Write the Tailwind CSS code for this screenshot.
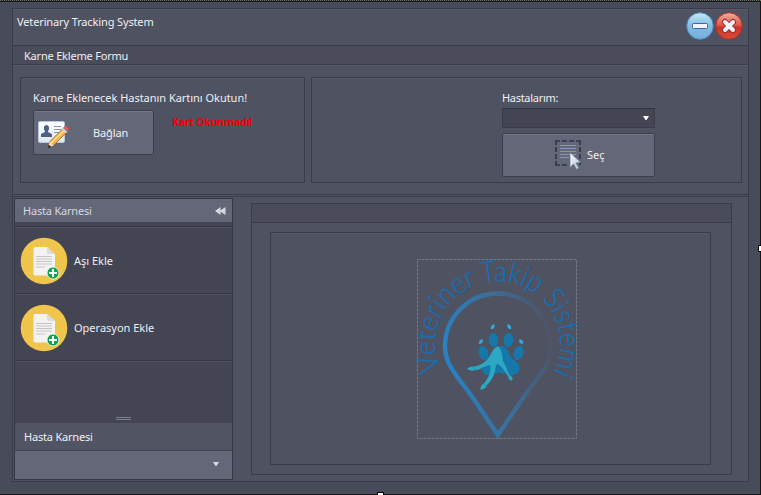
<!DOCTYPE html>
<html lang="tr">
<head>
<meta charset="utf-8">
<title>Veterinary Tracking System</title>
<script src="https://cdn.jsdelivr.net/npm/@tailwindcss/browser@4"></script>
</head>
<body class="w-[761px] h-[495px] overflow-hidden bg-[#484b59] text-[#eeeff4] text-[11px] leading-[15px] font-['Noto_Sans','Open_Sans',sans-serif]">
<div class="relative w-[761px] h-[495px] pt-[8px] pl-[12px] border-r border-b border-[#18181c]">
  <div class="absolute left-0 top-0 w-[761px] border-t border-dotted border-[#77776c] bg-[#191a1e] h-[2px]"></div>
  <div class="absolute left-[377px] top-[492px] w-[7px] h-[3px] bg-white border border-b-0 border-black"></div>
  <div class="absolute left-[758px] top-[245px] w-[3px] h-[7px] bg-white border border-r-0 border-black"></div>

  <div class="w-[737px] h-[474px] flex flex-col border border-[#3a3c49] bg-[#4f5261]">
    <header class="h-[37px] flex justify-between border-b border-[#3a3c49] border-t border-t-[#555867]">
      <h1 class="pl-[4px] pt-[4px] tracking-[-0.13px] whitespace-nowrap">Veterinary Tracking System</h1>
      <div class="flex gap-[1px] pt-[2px] pr-[5px]">
        <svg class="w-[28px] h-[28px]" viewBox="0 0 28 28">
          <defs><linearGradient id="bl" x2="0" y2="1"><stop stop-color="#c4eaf8"/><stop offset=".5" stop-color="#83bce0"/><stop offset="1" stop-color="#74afe0"/></linearGradient></defs>
          <circle cx="14" cy="14" r="13.3" fill="url(#bl)" stroke="#4a85ba"/>
          <rect x="6.500" y="11.500" width="15" height="5" rx="1" fill="#f3f4fb" stroke="#3868a8"/>
        </svg>
        <svg class="w-[28px] h-[28px]" viewBox="0 0 28 28">
          <defs><linearGradient id="rd" x2="0" y2="1"><stop stop-color="#f4ae9c"/><stop offset=".45" stop-color="#de5d4d"/><stop offset=".55" stop-color="#ca3329"/><stop offset="1" stop-color="#d94d38"/></linearGradient></defs>
          <circle cx="14" cy="14" r="13.3" fill="url(#rd)" stroke="#a72f2a"/>
          <path d="M10 10l8 8m0-8l-8 8" stroke="#a1262a" stroke-width="6" stroke-linecap="round"/>
          <path d="M10 10l8 8m0-8l-8 8" stroke="#f1f4fc" stroke-width="4" stroke-linecap="round"/>
        </svg>
      </div>
    </header>
    <div class="h-[19px] bg-[#4a4c5a] border-b border-[#3a3c49] pl-[11px] pt-[2px] tracking-[-0.2px] whitespace-nowrap">Karne Ekleme Formu</div>

    <section class="h-[130px] flex gap-[6px] pt-[11px] pl-[7px] border-t border-t-[#575a69] border-b border-b-[#3a3c49]">
      <div class="w-[285px] h-[106px] border border-[#3a3c49] pl-[12px] pt-[12px] shadow-[inset_0_1px_#555867]">
        <p class="whitespace-nowrap h-[20px] tracking-[-0.03px]">Karne Eklenecek Hastanın Kartını Okutun!</p>
        <div class="flex gap-[18px]">
          <button class="w-[121px] h-[45px] rounded-[2px] border border-[#3b3d4a] bg-[#646777] shadow-[inset_0_1px_#757888] flex items-center pl-[4px]">
            <svg class="w-[32px] h-[32px]" viewBox="0 0 32 32">
              <defs><linearGradient id="cd" x2="0" y2="1"><stop stop-color="#fff"/><stop offset="1" stop-color="#dfe6f2"/></linearGradient></defs>
              <rect x=".5" y="4.500" width="26" height="21" rx="1.500" fill="url(#cd)" stroke="#b5c7e3"/>
              <path d="M3 20v-2c0-2 3-2 4-3v-1c-2-2-1-6 1.500-6s3.500 4 1.500 6v1c1 1 4 1 4 3v2z" fill="#4d5f82"/>
              <path d="M16 9.500h7m-7 3h7m-7 3h7" stroke="#8495b2"/>
              <path d="M10 30.500l1.800-6L25 11.500l4 3.500L15.500 28.500z" fill="#f3b34a" stroke="#a4682b" stroke-width=".8"/>
              <path d="M13 26L27 13" stroke="#ffe09a" stroke-width="1.500"/>
              <path d="M11.800 24.500l3.700 4-5.500 2z" fill="#f0ddc0"/>
              <path d="M10 30.800l.8-2.800 1.900 1.900z" fill="#242226" stroke="#242226" stroke-width=".6"/>
              <path d="M23.800 12.500l1.700-1.700 4 3.800-1.700 1.600z" fill="#c9d3e2"/>
              <path d="M25.500 10.800l1.500-1.300q1.200-.6 2.500.6t.9 2.700l-1.200 1.500z" fill="#de6668" stroke="#b53f45" stroke-width=".6"/>
            </svg>
            <span class="pl-[23px] tracking-[-0.1px]">Bağlan</span>
          </button>
          <p class="pt-[4px] font-bold text-[#ee0008] tracking-[-0.5px] whitespace-nowrap">Kart Okunmadı!</p>
        </div>
      </div>
      <div class="w-[431px] h-[106px] border border-[#3a3c49] pl-[190px] pt-[12px] shadow-[inset_0_1px_#555867]">
        <p class="h-[18px] tracking-[-0.3px]">Hastalarım:</p>
        <div class="w-[153px] h-[20px] bg-[#434553] border border-[#3a3c49] border-t-[#323440] flex items-center justify-end pr-[5px]">
          <svg class="w-[6px] h-[4px]" viewBox="0 0 6 4"><path d="M0 0h6L3.500 4h-1z" fill="#fff"/></svg>
        </div>
        <button class="mt-[5px] w-[153px] h-[44px] rounded-[2px] border border-[#3b3d4a] bg-[#646777] shadow-[inset_0_1px_#757888] flex items-center pl-[52px] pb-[1px]">
          <svg class="w-[26px] h-[32px]" viewBox="0 0 26 32">
            <defs><linearGradient id="ar" x2="1" y2="1"><stop stop-color="#fff"/><stop offset="1" stop-color="#a9b7cf"/></linearGradient></defs>
            <path d="M1 6V2h4m2 0h5m2 0h5m2 0h4v4m0 2v5m0 2v5m0 2v4M1 8v5m0 2v5m0 2v4h4m2 0h5" fill="none" stroke="#2b3652" stroke-width="1.700"/>
            <path d="M5 6.500h16M5 9.500h16M5 12.500h16M5 15.500h16M5 18.500h9" stroke="#8793bb"/>
            <path d="M15 13.500v15l3.500-3.500 3 5.500 2.500-1.500-3-5 5-.5z" fill="url(#ar)" stroke="#65718a" stroke-width=".7"/>
          </svg>
          <span class="pl-[6px]">Seç</span>
        </button>
      </div>
    </section>

    <section class="mt-[1px] flex-1 flex border-t border-[#3a3c49] pt-[1px] pl-[1px]">
      <aside class="w-[219px] h-[282px] border border-[#353743] bg-[#434553] flex flex-col">
        <div class="h-[23px] bg-[#646777] text-[#d5d7e0] flex items-center justify-between pl-[8px] pr-[6px]">
          <span class="tracking-[-0.2px]">Hasta Karnesi</span>
          <svg class="w-[11px] h-[8px]" viewBox="0 0 11 8"><path d="M0 4l5.500-4v8zM4.500 4l6-4v8z" fill="#d5d7e0"/></svg>
        </div>
        <ul class="mt-[4px] h-[136px] border-t border-[#353743]">
          <li class="h-[67px] border-t border-t-[#4d505e] border-b border-b-[#353743] flex items-center gap-[6px] pl-[5px]">
            <svg class="w-[48px] h-[48px]" viewBox="0 0 48 48">
              <defs><g id="doc">
                <circle cx="24" cy="24" r="23.300" fill="#efc64b"/>
                <path d="M15 10h12l8 7v20q0 1.500-1.500 1.500h-18.500q-1.500 0-1.500-1.500v-25.500q0-1.500 1.500-1.500z" fill="#f3f3f3"/>
                <path d="M27 10v5.500q0 1.500 1.500 1.500h6.500z" fill="#dcdcdc"/>
                <path d="M16 19.500h16M16 22h16M16 24.500h16M16 27h16M16 30h9" stroke="#c4c4c4"/>
                <circle cx="33" cy="36" r="6" fill="#10a451" stroke="#f7f7f7" stroke-width=".8"/>
                <path d="M33 32v8m-4-4h8" stroke="#fff" stroke-width="2"/>
              </g></defs><use href="#doc"/>
            </svg>
            <span>Aşı Ekle</span>
          </li>
          <li class="h-[67px] border-t border-t-[#4d505e] border-b border-b-[#353743] flex items-center gap-[6px] pl-[5px]">
            <svg class="w-[48px] h-[48px]" viewBox="0 0 48 48"><use href="#doc"/></svg>
            <span>Operasyon Ekle</span>
          </li>
          <li class="border-t border-[#4d505e]"></li>
        </ul>
        <div class="mt-auto mb-[3px] ml-[101px] w-[15px] h-[3px] border-y border-[#7b7e8d]"></div>
        <div class="h-[28px] bg-[#515463] border-b border-[#414451] pl-[9px] pt-[6px] tracking-[-0.2px]">Hasta Karnesi</div>
        <div class="h-[28px] bg-[#646777] flex items-center justify-end pr-[13px]">
          <svg class="w-[6px] h-[4px] mb-[2px]" viewBox="0 0 6 4"><path d="M0 0h6L3.500 4h-1z" fill="#d5d7e0"/></svg>
        </div>
      </aside>

      <main class="ml-[18px] mt-[5px] w-[481px] h-[272px] border border-[#3a3c49] flex flex-col">
        <div class="h-[19px] bg-[#4a4c5a] border-b border-[#3a3c49] shrink-0"></div>
        <div class="mt-[9px] ml-[18px] w-[441px] h-[233px] border border-[#3a3c49] shadow-[inset_0_1px_#555867] pl-[146px] pt-[26px]">
          <svg class="w-[160px] h-[180px] overflow-visible" viewBox="417 259 160 180">
            <defs>
              <linearGradient id="pin" gradientUnits="userSpaceOnUse" x1="443" y1="345" x2="551" y2="325">
                <stop stop-color="#2782c5"/><stop offset=".5" stop-color="#3476a9" stop-opacity=".8"/><stop offset="1" stop-color="#3476a9" stop-opacity=".03"/>
              </linearGradient>
              <path id="arc" d="M440.700 369A62.500 62.500 0 1 1 554 371"/>
            </defs>
            <rect x="417.500" y="259.500" width="159" height="179" fill="none" stroke="#747786" stroke-dasharray="3 1"/>
            <path d="M498 435L473 398C460 379 445 366 445 346.500A53 53 0 0 1 551 346.500C551 366 536 379 523 398Z" fill="none" stroke="url(#pin)" stroke-width="4.300"/>
            <text class="font-['Lato'] font-light" font-size="29" fill="#146fb5" stroke="#146fb5" stroke-width=".3"><textPath href="#arc" textLength="252" lengthAdjust="spacingAndGlyphs">Veteriner Takip Sistemi</textPath></text>
            <g fill="#1677aa">
              <ellipse cx="493.500" cy="340" rx="4.800" ry="7.200" transform="rotate(-5 493.500 340)"/>
              <ellipse cx="508.500" cy="340" rx="4.800" ry="7.200" transform="rotate(8 508.500 340)"/>
              <ellipse cx="483.500" cy="353" rx="4.800" ry="7.200" transform="rotate(-16 483.500 353)"/>
              <ellipse cx="518.500" cy="353" rx="4.800" ry="7.200" transform="rotate(16 518.500 353)"/>
              <path d="M501 346c6 0 7 5 9 10 2 4 9 5 9.500 11s-4 8-8 8-7-2-12-2-8 3-12 2c-4 0-6-4-5-8 1-3 7-5 9-10 2-6 4-11 9.500-11z"/>
            </g>
            <g fill="#32a9df">
              <path d="M494.500 324q-4.500 1-3.500 5.500l3-1.200q1-1.500.5-4.300z"/><path d="M507.500 324q4.500 1 3.500 5.500l-3-1.200q-1-1.500-.5-4.300z"/>
              <path d="M482.500 339q-4.500 1-3.500 5.200l3.300-1.200q1-1.500.2-4z"/><path d="M519.500 339q4.500 1 3.500 5.200l-3.300-1.200q-1-1.500-.2-4z"/>
            </g>
            <path d="M497.800 346.500C501 348 502.500 354 503 361C505 365 507 369 508.500 373.500L511 376C513 378 513 380 511.500 380.500C509.500 380 508 378 507.500 375.500C505 371 501 366 498 364C495 364 496 367 495 371C493.500 377 491 381 487 385C486 388 484 389 480.500 390C480.500 386.500 481.500 384 484 383.500C488 378 491 373 490.500 366C489 364 486 366 484 367C481 369 478 370 474 370.500C471 371 468.500 370 467 369C469 367 471 366.500 474 366.500C481 365.500 487 361 490 355.500C492.500 351 494.500 347 497.800 346.500z" fill="#2ca8c4"/>
            <path d="M474 366.500l.6 4M483.500 383.500l4 2.500M508 376.500l3.500-1.500" stroke="#357f98" stroke-width=".8"/>
          </svg>
        </div>
      </main>
    </section>
  </div>
</div>
</body>
</html>
